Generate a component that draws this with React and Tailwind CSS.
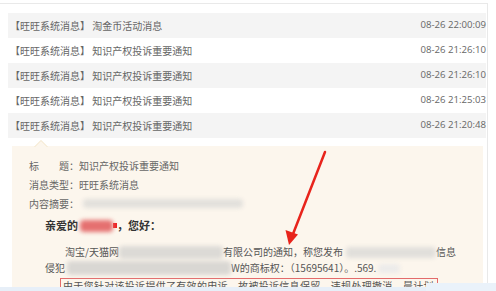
import React from "react";

const rows = [
    { title: "淘金币活动消息", time: "08-26 22:00:09" },
    { title: "知识产权投诉重要通知", time: "08-26 21:26:10" },
    { title: "知识产权投诉重要通知", time: "08-26 21:26:10" },
    { title: "知识产权投诉重要通知", time: "08-26 21:25:03" },
    { title: "知识产权投诉重要通知", time: "08-26 21:20:48" },
];

function Smudge({ className }) {
    return <span className={"inline-block align-middle rounded-sm blur-[2px] " + className} />;
}

export default function App() {
    return (
        <div
            className="relative h-[291px] w-[496px] overflow-hidden bg-white text-[#666]"
            style={{ fontFamily: '"Noto Sans CJK SC", "Noto Sans", sans-serif' }}
        >
            <div className="mt-[3px] h-[288px] w-[488px] border-t border-r border-[#e9e9e9] pt-[9px] pl-[8px] pr-[1px]">
                {rows.map((r, i) => (
                    <div
                        key={i}
                        className={[
                            "flex h-[25px] items-center justify-between pl-[2px] text-[10px]",
                            i % 2 === 0 ? "bg-[#f4f4f4]" : "bg-white",
                        ].join(" ")}
                    >
                        <span className="whitespace-nowrap">
                            【旺旺系统消息】 {r.title}
                        </span>
                        <span className="text-[9.6px]" style={{ fontFamily: '"Open Sans", sans-serif' }}>
                            {r.time}
                        </span>
                    </div>
                ))}

                <div className="relative mt-[8px] ml-[4px] h-[142px] w-[471px] bg-[#fcf6ed] pt-[10px] pl-[17px] text-[10px] text-[#666]">
                    <svg className="absolute -top-[6px] left-[22px]" width="14" height="7" viewBox="0 0 14 7">
                        <path d="M0 7 L7 0 L14 7 Z" fill="#fcf6ed" />
                        <path d="M0.5 7 L7 0.5 L13.5 7" fill="none" stroke="#f3e6c9" strokeWidth="1" />
                    </svg>

                    <div className="h-[19px] leading-[19px]">标　　题：知识产权投诉重要通知</div>
                    <div className="h-[19px] leading-[19px]">消息类型：旺旺系统消息</div>
                    <div className="flex h-[19px] items-center leading-[19px]">
                        内容摘要：
                        <Smudge className="ml-[4px] h-[9px] w-[160px] bg-[#e2e0dc]" />
                    </div>

                    <div className="mt-[3px] ml-[16px] flex h-[19px] items-center text-[11px] font-bold text-[#333]">
                        亲爱的
                        <Smudge className="ml-[2px] h-[12px] w-[33px] rounded-full bg-[#e57070]" />
                        <span className="inline-block h-[5px] w-[4px] bg-[#e22]" />
                        ，您好：
                    </div>

                    <div className="mt-[9px] ml-[16px] leading-[16px] text-[#555]">
                        <div className="flex items-center whitespace-nowrap pl-[20px]">
                            淘宝/天猫网
                            <Smudge className="h-[13px] w-[104px] bg-[#dcdad6]" />
                            有限公司的通知，称您发布
                            <Smudge className="ml-[3px] h-[11px] w-[90px] bg-[#e1dfdb]" />
                            信息
                        </div>
                        <div className="flex items-center whitespace-nowrap">
                            侵犯
                            <Smudge className="ml-[2px] h-[14px] w-[164px] bg-[#d9d7d3]" />
                            W的商标权：（15695641）。.569.
                            <Smudge className="ml-[2px] h-[9px] w-[22px] bg-[#ecebea]" />
                        </div>
                    </div>

                    <div className="mt-[2px] ml-[31px] w-[378px] whitespace-nowrap border border-[#e36b6b] pl-[2px] leading-[14px] tracking-[0.3px] text-[#555]">
                        由于您针对该投诉提供了有效的申诉，故被投诉信息保留，违规处理撤消。晨计划
                    </div>
                </div>
            </div>

            <div className="absolute bottom-0 left-0 h-[4px] w-[496px] bg-[#e7eff8]" />
            <div className="absolute bottom-0 right-0 h-[8px] w-[70px] bg-[#eaf2fa]" />

            <svg className="absolute left-0 top-0" width="496" height="291" viewBox="0 0 496 291">
                <line x1="325" y1="152" x2="293" y2="234" stroke="#e8241c" strokeWidth="2.5" strokeLinecap="round" />
                <path d="M289 245 L285.5 230 L298 234.5 Z" fill="#e8241c" />
            </svg>
        </div>
    );
}
